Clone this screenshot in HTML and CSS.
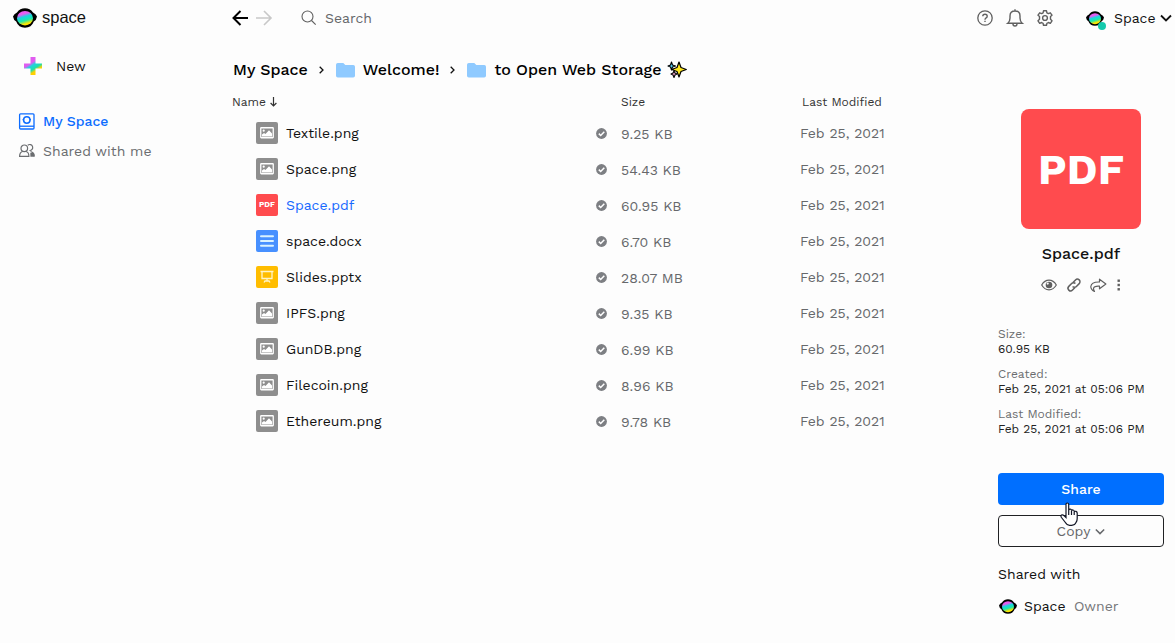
FILE: index.html
```html
<!DOCTYPE html>
<html lang="en">
<head>
<meta charset="utf-8">
<title>Space</title>
<link rel="stylesheet" href="styles.css">
</head>
<body>
<svg class="defs" aria-hidden="true">
  <defs>
    <linearGradient id="rainbow" x1="0.3" y1="0" x2="0.62" y2="1">
      <stop offset="0.22" stop-color="#e95cf0"/><stop offset="0.42" stop-color="#17d8df"/>
      <stop offset="0.65" stop-color="#1fe9a8"/><stop offset="0.88" stop-color="#ffe600"/>
    </linearGradient>
    <linearGradient id="plus-fill" x1="0.2" y1="0.1" x2="0.75" y2="0.95">
      <stop offset="0.3" stop-color="#e05cf0"/><stop offset="0.45" stop-color="#1fd5dc"/>
      <stop offset="0.65" stop-color="#1fe0a8"/><stop offset="0.8" stop-color="#ffd000"/>
    </linearGradient>
    <symbol id="logo" viewBox="0 0 24 20">
      <path d="M0 8.500Q1 6 4 4.500 7 .3 12 .3T20 4.500Q23 6 24 8.500 23.500 12 20.800 13.500 18.500 19.700 12 19.700T3.200 13.500Q.5 12 0 8.500Z" fill="#000"/>
      <ellipse cx="12" cy="10.200" rx="8" ry="7.300" fill="url(#rainbow)"/>
    </symbol>
    <symbol id="image" viewBox="0 0 22 22">
      <rect width="22" height="22" rx="2" fill="#8e8e8e"/>
      <rect x="4.750" y="5.750" width="12.500" height="10" rx=".5" fill="none" stroke="#fff" stroke-width="1.300"/>
      <circle cx="7.700" cy="8.700" r="1.100" fill="#fff"/>
      <path d="M6 14.500v-2l2-1.500 1.500 1L13 8.300l3 3.200v3z" fill="#fff"/>
    </symbol>
    <symbol id="folder" viewBox="0 0 19 15">
      <path d="M1.800 0h5.500l2 2h8q1.700 0 1.700 1.700v9q0 1.800-1.800 1.800H1.800Q0 14.500 0 12.700V1.800Q0 0 1.800 0z" fill="#8fcaff"/>
    </symbol>
    <symbol id="check" viewBox="0 0 11 11">
      <circle cx="5.500" cy="5.500" r="5.400" fill="#7d7f83"/><path d="m2.800 5.600 1.900 1.900 3.600-3.700" fill="none" stroke="#fff" stroke-width="1.500"/>
    </symbol>
    <symbol id="down" viewBox="0 0 12 8"><path d="m1 1.500 5 5 5-5" fill="none" stroke="currentColor" stroke-width="1.800"/></symbol>
    <symbol id="right" viewBox="0 0 5 8"><path d="m.7.7 3.300 3.300L.7 7.300" fill="none" stroke="#111" stroke-width="1.300"/></symbol>
  </defs>
</svg>
<div class="app">
  <aside class="sidebar">
    <div class="brand"><svg width="24" height="20"><use href="#logo"/></svg><span>space</span></div>
    <div class="new"><svg width="18" height="18" viewBox="0 0 18 18"><path d="M6.500 0h5v6.500H18v5h-6.500V18h-5v-6.500H0v-5h6.500z" fill="url(#plus-fill)"/></svg><span>New</span></div>
    <nav class="nav">
      <div class="nav-item active"><svg width="16" height="17" viewBox="0 0 16 17" fill="none" stroke="currentColor" stroke-width="1.300"><rect x=".6" y=".8" width="14.400" height="15.200" rx="1"/><path d="M1 13.200h14"/><circle cx="7.800" cy="7" r="3.200" stroke-width="1.500"/><path d="M3.600 6.600h1M11 6.600h1"/></svg><span>My Space</span></div>
      <div class="nav-item"><svg width="16" height="14" viewBox="0 0 16 14" fill="none" stroke="currentColor" stroke-width="1.200"><circle cx="5.300" cy="4.300" r="3.300"/><path d="M8.800 1.200a3 3 0 1 1 1.700 5.300M3.500 7.500C1.500 8 .6 9.200.6 12.400h9.300c0-3-.8-4.400-2.800-4.900M11.500 7.600c2.600.5 3.800 1.800 3.800 4.800"/><path d="M11.300 9h3.400l.7 3.800h-4z" fill="currentColor" stroke="none"/></svg><span>Shared with me</span></div>
    </nav>
  </aside>
  <main class="main">
    <div class="topbar">
      <svg width="16" height="16" viewBox="0 0 16 16" fill="none" stroke="#000" stroke-width="2"><path d="M16 8H1.500M8.500 1l-7 7 7 7"/></svg>
      <svg class="forward" width="16" height="16" viewBox="0 0 16 16" fill="none" stroke="#c8c8c8" stroke-width="1.600"><path d="M0 8h15M8 1l7 7-7 7"/></svg>
      <svg class="search-icon" width="16" height="16" viewBox="0 0 16 16" fill="none" stroke="#606060" stroke-width="1.100"><circle cx="6.500" cy="6.500" r="5.500"/><path d="m10.500 10.500 4.200 4.200"/></svg>
      <span class="search">Search</span>
    </div>
    <div class="crumbs">
      <span>My Space</span><svg class="sep" width="5" height="8"><use href="#right"/></svg>
      <svg class="folder" width="19" height="15"><use href="#folder"/></svg><span>Welcome!</span><svg class="sep" width="5" height="8"><use href="#right"/></svg>
      <svg class="folder" width="19" height="15"><use href="#folder"/></svg><span>to Open Web Storage</span>
      <svg class="sparkles" width="19" height="18" viewBox="0 0 19 18" stroke="#000" stroke-linejoin="round"><path d="M3.500 1 4.500 4 7.500 5 4.500 6 3.500 9 2.500 6 0 5 2.500 4z" fill="#55d0f4" stroke-width="1.100"/><path d="m6 10 1 2 2 1-2 1-1 2.500L5 14l-2-1 2-1z" fill="#f5a6cd" stroke-width="1.100"/><path d="m11 1 2 5.500 5.300 2L13 10.500 11 16l-2-5.500-5.300-2L9 6.500z" fill="#ffe81e" stroke-width="1.200"/></svg>
    </div>
    <div class="row head"><span class="h-name">Name <svg width="7" height="10" viewBox="0 0 7 10" fill="none" stroke="#333" stroke-width="1.200"><path d="M3.500 0v8.800M.6 6l2.900 3 2.900-3"/></svg></span><span class="h-size">Size</span><span class="h-date">Last Modified</span></div>
    <div class="row"><svg class="file" width="22" height="22"><use href="#image"/></svg><span class="name">Textile.png</span><svg class="check" width="11" height="11"><use href="#check"/></svg><span class="size">9.25 KB</span><span class="date">Feb 25, 2021</span></div>
    <div class="row"><svg class="file" width="22" height="22"><use href="#image"/></svg><span class="name">Space.png</span><svg class="check" width="11" height="11"><use href="#check"/></svg><span class="size">54.43 KB</span><span class="date">Feb 25, 2021</span></div>
    <div class="row"><span class="file pdf-icon">PDF</span><span class="name selected">Space.pdf</span><svg class="check" width="11" height="11"><use href="#check"/></svg><span class="size">60.95 KB</span><span class="date">Feb 25, 2021</span></div>
    <div class="row"><svg class="file" width="22" height="22" viewBox="0 0 22 22"><rect width="22" height="22" rx="2" fill="#4790ff"/><path d="M5 6.200h12M5 11h12M5 15.800h12" stroke="#d9f2ff" stroke-width="2" stroke-linecap="round"/></svg><span class="name">space.docx</span><svg class="check" width="11" height="11"><use href="#check"/></svg><span class="size">6.70 KB</span><span class="date">Feb 25, 2021</span></div>
    <div class="row"><svg class="file" width="22" height="22" viewBox="0 0 22 22"><rect width="22" height="22" rx="2" fill="#ffbd00"/><path d="M4.500 5.500h13M6 6v6.500h10V6M11 12.500V15M8 16.500l1-1.500h4l1 1.500" fill="none" stroke="#fff5c8" stroke-width="1.300"/></svg><span class="name">Slides.pptx</span><svg class="check" width="11" height="11"><use href="#check"/></svg><span class="size">28.07 MB</span><span class="date">Feb 25, 2021</span></div>
    <div class="row"><svg class="file" width="22" height="22"><use href="#image"/></svg><span class="name">IPFS.png</span><svg class="check" width="11" height="11"><use href="#check"/></svg><span class="size">9.35 KB</span><span class="date">Feb 25, 2021</span></div>
    <div class="row"><svg class="file" width="22" height="22"><use href="#image"/></svg><span class="name">GunDB.png</span><svg class="check" width="11" height="11"><use href="#check"/></svg><span class="size">6.99 KB</span><span class="date">Feb 25, 2021</span></div>
    <div class="row"><svg class="file" width="22" height="22"><use href="#image"/></svg><span class="name">Filecoin.png</span><svg class="check" width="11" height="11"><use href="#check"/></svg><span class="size">8.96 KB</span><span class="date">Feb 25, 2021</span></div>
    <div class="row"><svg class="file" width="22" height="22"><use href="#image"/></svg><span class="name">Ethereum.png</span><svg class="check" width="11" height="11"><use href="#check"/></svg><span class="size">9.78 KB</span><span class="date">Feb 25, 2021</span></div>
  </main>
  <aside class="details">
    <div class="account">
      <svg width="16" height="16" viewBox="0 0 16 16" fill="none" stroke="#606060" stroke-width="1.300"><circle cx="8" cy="8" r="7.200"/><path d="M5.800 6.300Q5.800 4.300 8 4.300t2.200 1.900Q10.200 7.400 8.900 8 8 8.500 8 9.700M8 10.800v1.300" stroke-width="1.400"/></svg>
      <svg width="16" height="18" viewBox="0 0 16 18" fill="none" stroke="#606060" stroke-width="1.400"><path d="M8 .3v1.500M.8 14.200h14.400Q13 12.500 13 9V7Q13 2 8 2T3 7v2q0 3.500-2.200 5.200zM6 15q0 2 2 2t2-2"/></svg>
      <svg width="16" height="16" viewBox="0 0 16 16" fill="none" stroke="#606060" stroke-width="1.400" stroke-linejoin="round"><circle cx="8" cy="8" r="2.400"/><path d="m6.500.8-.4 2-1.500.8-1.900-.8L1 5.200l1.500 1.300v2.800L1 10.800l1.700 2.500 1.900-.8 1.500.8.400 2h3l.4-2 1.500-.8 1.900.8 1.700-2.500-1.500-1.500V6.500L15 5.200l-1.700-2.400-1.900.8-1.500-.8-.4-2z"/></svg>
      <div class="user"><span class="avatar"><svg width="18" height="15"><use href="#logo"/></svg><i></i></span><span class="user-name">Space</span><svg width="12" height="8"><use href="#down"/></svg></div>
    </div>
    <div class="preview">PDF</div>
    <div class="title"><span>Space.pdf</span></div>
    <div class="actions">
      <svg width="16" height="12" viewBox="0 0 16 12"><path d="M.7 6Q3.500 1.200 8 1.200T15.300 6Q12.500 10.800 8 10.800T.7 6z" fill="none" stroke="#606060" stroke-width="1.200"/><circle cx="8" cy="6" r="3.300" fill="#606060"/><circle cx="6.700" cy="4.600" r="1.100" fill="#fdfdfd"/></svg>
      <svg width="14" height="14" viewBox="0 0 14 14" fill="none" stroke="#606060" stroke-width="1.500"><path d="m6 4.500 2.500-2.600a2.500 2.500 0 0 1 3.700 3.700L9.400 8.400a2.500 2.500 0 0 1-3.800 0M8 9.500l-2.500 2.600a2.500 2.500 0 0 1-3.700-3.700l2.800-2.800a2.500 2.500 0 0 1 3.800 0"/></svg>
      <svg width="17" height="15" viewBox="0 0 17 15" fill="none" stroke="#606060" stroke-width="1.200" stroke-linejoin="round"><path d="M9.500 1.200 15.900 6 9.500 10.800V8.200Q4 7.800 3.500 10.500q0 1.200 1 3Q.7 11.500.8 8.500 1.500 3.700 9.500 4z"/></svg>
      <svg width="4" height="12" viewBox="0 0 4 12" fill="#606060"><rect x=".5" y=".5" width="2.400" height="2.400"/><rect x=".5" y="4.800" width="2.400" height="2.400"/><rect x=".5" y="9.100" width="2.400" height="2.400"/></svg>
    </div>
    <dl class="meta"><dt>Size:</dt><dd>60.95 KB</dd><dt>Created:</dt><dd>Feb 25, 2021 at 05:06 PM</dd><dt>Last Modified:</dt><dd>Feb 25, 2021 at 05:06 PM</dd></dl>
    <div class="btn share">Share
      <svg class="cursor" width="19" height="25" viewBox="0 0 19 25"><path d="M6 2.200Q6 1 7.300 1t1.400 1.200V8.500Q9 7 10.300 7.200t1.300 1.600q.4-1 1.500-.8t1.200 1.600q.6-.6 1.700-.2t1.200 1.600v5.500q0 2-1 3.600-1.200 3.200-4.500 3.200H9.500q-2.500 0-4.500-3.300L1.300 15.300Q.5 13.700 1.500 13q1.300-.6 2.700.8L6 15.500zM8.700 8v5M11.500 9v4M14.200 10v3" fill="#fff" stroke="#111525" stroke-width="1.200"/></svg>
    </div>
    <div class="btn copy"><span>Copy</span><svg width="10" height="7"><use href="#down"/></svg></div>
    <div class="shared-title">Shared with</div>
    <div class="member"><svg width="18" height="15"><use href="#logo"/></svg><span class="member-name">Space</span><span class="role">Owner</span></div>
  </aside>
</div>
</body>
</html>
```
FILE: styles.css
```css
* { box-sizing: border-box; }
body { margin: 0; background: #fdfdfd; color: #111; font: 14px/20px "Work Sans", Inter, "Liberation Sans", sans-serif; overflow: hidden; }
svg { display: block; flex: none; overflow: visible; }
.defs { position: absolute; width: 0; height: 0; }
.app { display: grid; grid-template-columns: 232px 766px 177px; width: 1175px; height: 643px; white-space: nowrap; }
.brand { display: flex; align-items: center; gap: 5px; height: 35px; padding-left: 13px; font: 16.5px/20px "Liberation Sans", sans-serif; }
.brand span { padding-bottom: 2px; }
.new { display: flex; align-items: center; gap: 14px; height: 30px; margin-top: 16px; padding-left: 24px; }
.nav { padding: 25px 0 0 19px; }
.nav-item { display: flex; align-items: center; gap: 8px; height: 30px; color: #6b6d70; }
.active { color: #0c6cff; font-weight: 500; }
.topbar { display: flex; align-items: center; height: 36px; }
.forward { margin-left: 8px; }
.search-icon { margin-left: 29px; }
.search { margin-left: 8px; color: #66686b; }
.crumbs { display: flex; align-items: center; height: 30px; margin-top: 19px; padding-left: 1px; font-size: 16px; font-weight: 500; color: #000; }
.sep { margin: 0 12px 0 11px; }
.folder { margin-right: 8px; }
.sparkles { margin-left: 7px; }
.row { display: grid; grid-template-columns: 24px 30px 310px 25px 179px 1fr; align-items: center; height: 36px; }
.head { height: 30px; font-size: 12px; color: #333; grid-template-columns: 389px 181px 1fr; padding-top: 4px; }
.h-name { display: flex; align-items: center; gap: 4px; }
.file { grid-column: 2; }
.size { color: #66686b; padding-top: 2px; }
.date { color: #66686b; }
.selected { color: #1769ff; }
.pdf-icon { width: 22px; height: 22px; border-radius: 2px; background: #ff4b4e; color: #fff; font-size: 8px; font-weight: 700; line-height: 22px; text-align: center; }
.account { display: flex; align-items: center; height: 36px; margin-left: -21px; gap: 14px; }
.user { display: flex; align-items: center; margin-left: 19px; }
.avatar { position: relative; width: 28px; }
.avatar i { position: absolute; left: 12px; top: 11px; width: 8px; height: 8px; border-radius: 50%; background: #14c9ac; }
.user-name { width: 46px; }
.preview { width: 120px; height: 120px; margin: 73px 0 0 23px; border-radius: 8px; background: #ff4b4e; color: #fff; font-size: 43px; font-weight: 700; line-height: 121px; text-align: center; }
.title { width: 166px; height: 30px; margin-top: 10px; text-align: center; font-size: 16px; font-weight: 500; line-height: 30px; }
.actions { display: flex; align-items: center; height: 20px; margin-top: 6px; padding-left: 43px; gap: 9.5px; }
.meta { margin: 32px 0 0; font-size: 12px; line-height: 15px; }
.meta dt { color: #6b6d70; }
.meta dd { margin: 0 0 10px; color: #222; }
.btn { position: relative; display: flex; align-items: center; justify-content: center; width: 166px; height: 32px; border-radius: 4px; }
.share { margin-top: 36px; background: #006fff; color: #fff; font-weight: 500; }
.cursor { position: absolute; left: 62px; top: 29px; z-index: 2; }
.copy { margin-top: 10px; border: 1px solid #202124; color: #66686b; gap: 5px; }
.shared-title { margin-top: 17px; }
.member { display: flex; align-items: center; height: 20px; margin-top: 12px; padding-left: 1px; }
.member-name { margin-left: 7px; width: 50px; }
.role { color: #76787b; }
```
